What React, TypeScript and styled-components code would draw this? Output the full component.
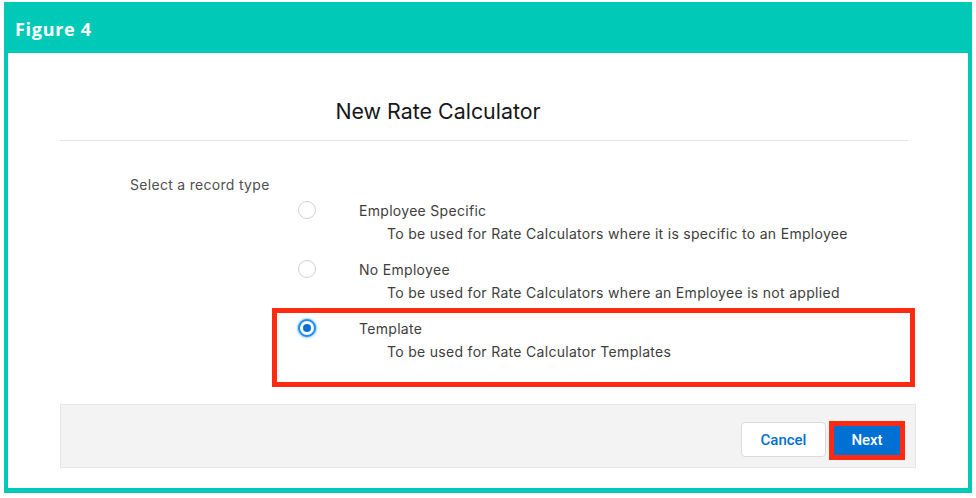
import React from "react";
import styled, { createGlobalStyle } from "styled-components";

const GlobalStyle = createGlobalStyle`
    html, body {
        margin: 0;
        padding: 0;
        background: #ffffff;
    }
    body {
        font-family: Inter, "Liberation Sans", Arial, sans-serif;
        color: #3e3e3c;
    }
    * {
        box-sizing: border-box;
    }
`;

const Frame = styled.div`
    margin: 2px 4px 0 4px;
    width: 968px;
    display: flex;
    flex-direction: column;
`;

const FigureHeader = styled.div`
    height: 51px;
    background: #00c9b8;
    display: flex;
    align-items: center;
    padding: 3px 0 0 11px;
    color: #ffffff;
    font-family: "Open Sans", "Liberation Sans", sans-serif;
    font-weight: 700;
    font-size: 18px;
    letter-spacing: 0.7px;
`;

const FigureBody = styled.div`
    border: 4px solid #00c9b8;
    border-top: none;
    border-bottom-width: 5px;
    padding: 44px 52px 20px 52px;
    display: flex;
    flex-direction: column;
`;

const ModalTitle = styled.h2`
    margin: 0;
    padding: 0 100px 15px 0;
    text-align: center;
    font-weight: 400;
    font-size: 21.4px;
    line-height: 28px;
    color: #16171a;
`;

const Divider = styled.div`
    height: 1px;
    margin-right: 8px;
    background: #e2e2e2;
`;

const RecordForm = styled.div`
    padding: 34px 0 0 70px;
    display: flex;
    flex-direction: column;
`;

const Legend = styled.div`
    font-size: 14px;
    line-height: 20px;
    letter-spacing: 0.3px;
    color: #4f4f4f;
`;

const OptionList = styled.div`
    margin: 4px 0 0 168px;
    display: flex;
    flex-direction: column;
    gap: 13px;
`;

const OptionRow = styled.label<{ $highlight?: boolean }>`
    position: relative;
    display: flex;
    align-items: flex-start;
    font-size: 14px;
    line-height: 23px;
    letter-spacing: 0.3px;
    color: #3e3e3c;

    &::after {
        content: "";
        display: ${(p) => (p.$highlight ? "block" : "none")};
        position: absolute;
        top: -9px;
        left: -26px;
        right: 1px;
        bottom: -24px;
        border: 5px solid #ff2a10;
        pointer-events: none;
    }
`;

const Radio = styled.span<{ $checked?: boolean }>`
    width: 18px;
    height: 18px;
    margin-top: 2px;
    flex-shrink: 0;
    border-radius: 50%;
    background: #ffffff;
    display: flex;
    align-items: center;
    justify-content: center;
    border: ${(p) => (p.$checked ? "2px solid #1b8ff0" : "1px solid #d3d1cf")};
    box-shadow: ${(p) =>
        p.$checked ? "0 0 2px 1px rgba(27, 143, 240, 0.45)" : "none"};

    &::before {
        content: "";
        display: ${(p) => (p.$checked ? "block" : "none")};
        width: 8px;
        height: 8px;
        border-radius: 50%;
        background: #0a6fd0;
    }
`;

const OptionText = styled.div`
    margin-left: 43px;
    display: flex;
    flex-direction: column;
`;

const OptionName = styled.span`
    color: #3e3e3c;
`;

const OptionDesc = styled.span`
    padding-left: 28px;
    color: #3e3e3c;
`;

const Footer = styled.div`
    margin-top: 41px;
    height: 64px;
    background: #f3f3f3;
    border: 1px solid #e6e6e6;
    display: flex;
    justify-content: flex-end;
    align-items: flex-start;
    gap: 4px;
    padding: 17px 11px 0 0;
`;

const Button = styled.button<{ $brand?: boolean; $highlight?: boolean }>`
    position: relative;
    height: 35px;
    width: ${(p) => (p.$brand ? "74px" : "85px")};
    border-radius: 4px;
    border: 1px solid ${(p) => (p.$brand ? "#0070d2" : "#dddbda")};
    background: ${(p) => (p.$brand ? "#0070d2" : "#ffffff")};
    color: ${(p) => (p.$brand ? "#ffffff" : "#0070d2")};
    font-family: Roboto, "Liberation Sans", sans-serif;
    font-weight: 500;
    font-size: 15px;
    padding: 0;
    cursor: pointer;

    &::after {
        content: "";
        display: ${(p) => (p.$highlight ? "block" : "none")};
        position: absolute;
        top: -2px;
        left: -2px;
        right: -2px;
        bottom: -4px;
        border: 5px solid #ff2a10;
        pointer-events: none;
    }
`;

const recordTypes = [
    {
        name: "Employee Specific",
        desc: "To be used for Rate Calculators where it is specific to an Employee",
    },
    {
        name: "No Employee",
        desc: "To be used for Rate Calculators where an Employee is not applied",
    },
    {
        name: "Template",
        desc: "To be used for Rate Calculator Templates",
    },
];

const App = () => {
    const [selected, setSelected] = React.useState(2);

    return (
        <>
            <GlobalStyle />
            <Frame>
                <FigureHeader>Figure 4</FigureHeader>
                <FigureBody>
                    <ModalTitle>New Rate Calculator</ModalTitle>
                    <Divider />
                    <RecordForm>
                        <Legend>Select a record type</Legend>
                        <OptionList>
                            {recordTypes.map((rt, i) => (
                                <OptionRow
                                    key={rt.name}
                                    $highlight={i === 2}
                                    onClick={() => setSelected(i)}
                                >
                                    <Radio $checked={selected === i} />
                                    <OptionText>
                                        <OptionName>{rt.name}</OptionName>
                                        <OptionDesc>{rt.desc}</OptionDesc>
                                    </OptionText>
                                </OptionRow>
                            ))}
                        </OptionList>
                    </RecordForm>
                    <Footer>
                        <Button>Cancel</Button>
                        <Button $brand $highlight>
                            Next
                        </Button>
                    </Footer>
                </FigureBody>
            </Frame>
        </>
    );
};

export default App;
